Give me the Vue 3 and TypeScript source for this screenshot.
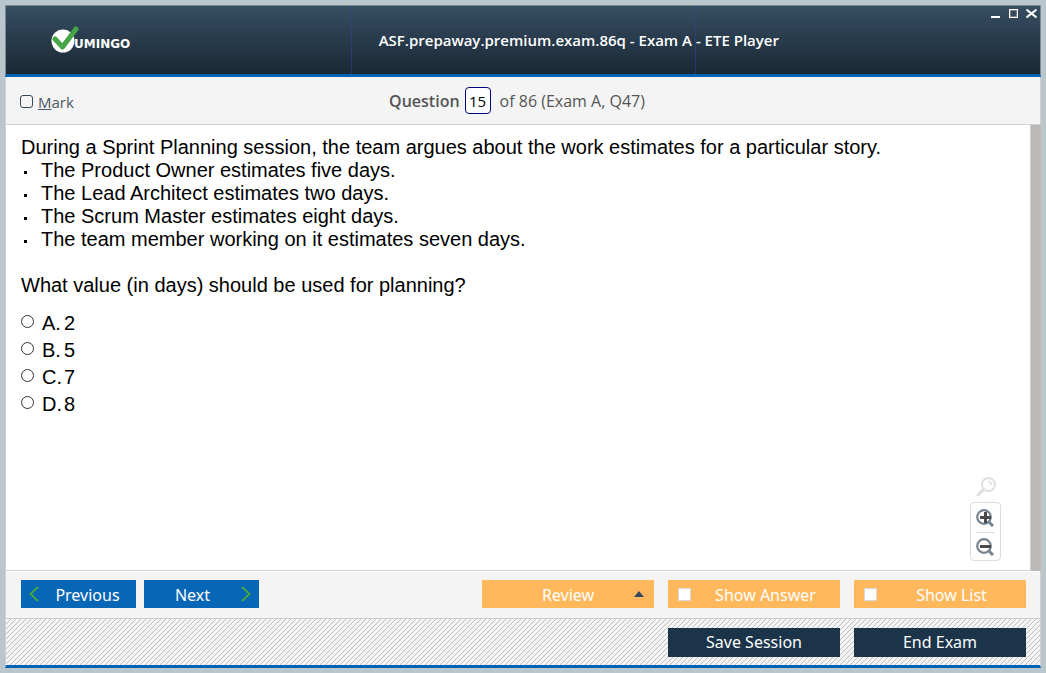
<script setup lang="ts">
import { ref } from 'vue'

const marked = ref(false)
const questionNumber = ref('15')
const selected = ref('')
const showAnswer = ref(false)
const showList = ref(false)
const estimates: string[] = [
  'The Product Owner estimates five days.',
  'The Lead Architect estimates two days.',
  'The Scrum Master estimates eight days.',
  'The team member working on it estimates seven days.',
]
const answers = [
  { key: 'A', text: '2' },
  { key: 'B', text: '5' },
  { key: 'C', text: '7' },
  { key: 'D', text: '8' },
]
</script>

<template>
  <div class="desktop">
    <div class="window">
      <header class="titlebar">
        <div class="brand">
          <svg class="logo" viewBox="0 0 28 28" aria-hidden="true">
            <circle cx="12" cy="15" r="11.5" fill="#fff" />
            <path d="M4 13 L11.5 21 L25 3" fill="none" stroke="#46a546" stroke-width="5" stroke-linecap="round" stroke-linejoin="round" />
          </svg>
          <span class="brand-name">UMINGO</span>
        </div>
        <h1 class="title">ASF.prepaway.premium.exam.86q - Exam A - ETE Player</h1>
        <div class="window-controls">
          <button type="button" aria-label="Minimize">
            <svg viewBox="0 0 11 11"><path d="M1 9H10" stroke="#fff" stroke-width="2" /></svg>
          </button>
          <button type="button" aria-label="Maximize">
            <svg viewBox="0 0 11 11"><rect x="1.5" y="1.5" width="8" height="8" fill="none" stroke="#fff" /><rect x="2.5" y="2.5" width="6" height="6" fill="none" stroke="#7d7d7d" /></svg>
          </button>
          <button type="button" aria-label="Close">
            <svg viewBox="0 0 11 11"><path d="M0.5 1.5L10.5 9.5M10.5 1.5L0.5 9.5" stroke="#fff" stroke-width="2" /></svg>
          </button>
        </div>
      </header>

      <div class="question-bar">
        <label class="mark"><input v-model="marked" type="checkbox" /><span><u>M</u>ark</span></label>
        <div class="counter">
          <label class="counter-label" for="question-number">Question</label>
          <input id="question-number" v-model="questionNumber" type="text" />
          <span class="counter-total">of 86 (Exam A, Q47)</span>
        </div>
      </div>

      <main class="content">
        <div class="page">
          <p>During a Sprint Planning session, the team argues about the work estimates for a particular story.</p>
          <ul>
            <li v-for="line in estimates" :key="line">{{ line }}</li>
          </ul>
          <p class="ask">What value (in days) should be used for planning?</p>
          <div class="answers">
            <label v-for="a in answers" :key="a.key">
              <input v-model="selected" type="radio" name="answer" :value="a.key" />
              <span class="key">{{ a.key }}.</span><span>{{ a.text }}</span>
            </label>
          </div>
          <div class="zoom">
            <svg class="zoom-icon" viewBox="0 0 20 20" aria-hidden="true">
              <g fill="none" stroke="#dedede" stroke-linecap="round">
                <circle cx="12.5" cy="7.5" r="6.5" stroke-width="2" />
                <path d="M7.5 12.5L2 18" stroke-width="3" />
                <path d="M12.5 4.5Q15 5 15.5 7.5" stroke-width="1.5" />
              </g>
            </svg>
            <div class="zoom-box">
              <button type="button" aria-label="Zoom in">
                <svg viewBox="0 0 18 18">
                  <circle cx="8" cy="8" r="6.8" fill="none" stroke="#75838f" stroke-width="2.2" />
                  <path d="M12.5 12.5L17 17" stroke="#75838f" stroke-width="3" />
                  <path d="M4 8.5H15M9.5 3V14" stroke="#4a4a4a" stroke-width="3" />
                </svg>
              </button>
              <button type="button" aria-label="Zoom out">
                <svg viewBox="0 0 18 18">
                  <circle cx="8" cy="8" r="6.8" fill="none" stroke="#75838f" stroke-width="2.2" />
                  <path d="M12.5 12.5L17 17" stroke="#75838f" stroke-width="3" />
                  <path d="M4 8.5H15" stroke="#4a4a4a" stroke-width="3" />
                </svg>
              </button>
            </div>
          </div>
        </div>
        <div class="scrollbar"></div>
      </main>

      <div class="toolbar">
        <button class="nav" type="button">
          <svg class="arrow" viewBox="0 0 10 16"><path d="M9 1L1.5 8L9 15" /></svg>
          <span>Previous</span>
        </button>
        <button class="nav next" type="button">
          <span>Next</span>
          <svg class="arrow" viewBox="0 0 10 16"><path d="M1 1L8.5 8L1 15" /></svg>
        </button>
        <button class="option first" type="button">
          <span>Review</span>
          <svg class="caret" viewBox="0 0 10 6"><path d="M0 6L5 0L10 6Z" fill="#34495e" /></svg>
        </button>
        <label class="option"><input v-model="showAnswer" type="checkbox" /><span>Show Answer</span></label>
        <label class="option"><input v-model="showList" type="checkbox" /><span>Show List</span></label>
      </div>

      <footer class="session">
        <button type="button">Save Session</button>
        <button type="button">End Exam</button>
      </footer>
    </div>
  </div>
</template>

<style>
body {
  margin: 0;
}
</style>

<style scoped>
* {
  box-sizing: border-box;
}
button {
  border: 0;
  padding: 0;
  background: none;
  font: inherit;
  color: inherit;
}
input {
  appearance: none;
  margin: 0;
}
svg {
  display: block;
}
.desktop {
  min-height: 100vh;
  padding: 5px;
  display: flex;
  background: #b9c6cc;
  font-family: "Open Sans", "Noto Sans", sans-serif;
  font-size: 16px;
}
.window {
  flex: 1;
  display: flex;
  flex-direction: column;
  border-left: 1px solid #cfd1d1;
  border-right: 1px solid #cfd1d1;
}
.titlebar {
  height: 72px;
  margin: 0 -1px;
  flex: none;
  display: grid;
  grid-template-columns: repeat(3, minmax(0, 1fr));
  border: 1px solid #7e8b92;
  border-bottom: 3px solid #0563b3;
  background: linear-gradient(#364e62, #1a2835);
  color: #fff;
}
.brand {
  display: flex;
  align-items: center;
  padding-left: 45px;
}
.logo {
  width: 28px;
  height: 28px;
  margin-right: -5px;
}
.brand-name {
  padding-top: 8px;
  font: bold 12px "DejaVu Sans", sans-serif;
}
.title {
  margin: 0;
  padding-left: 27px;
  display: flex;
  align-items: center;
  border-left: 1px dotted #33419a;
  font-size: 15px;
  font-weight: 600;
  line-height: 20px;
  white-space: nowrap;
}
.window-controls {
  display: flex;
  justify-content: flex-end;
  gap: 7px;
  padding: 2px 3px;
  border-left: 1px dotted #33419a;
}
.window-controls button {
  height: 11px;
}
.window-controls svg {
  width: 11px;
  height: 11px;
}
.question-bar {
  height: 48px;
  flex: none;
  display: grid;
  grid-template-columns: 1fr auto 1fr;
  align-items: center;
  border-bottom: 1px solid #d2d2d2;
  background: #f4f4f4;
  color: #555;
}
.mark {
  display: flex;
  align-items: center;
  gap: 5px;
  padding: 2px 0 0 14px;
  font-size: 15px;
  color: #4b5866;
}
.mark input {
  width: 13px;
  height: 13px;
  border: 1px solid #34495e;
  border-radius: 3px;
}
.counter {
  display: flex;
  align-items: center;
  padding-right: 12px;
}
.counter-label {
  font-weight: 600;
}
.counter input {
  width: 26px;
  height: 27px;
  margin: 0 9px 0 5px;
  padding: 0;
  border: 1px solid #000080;
  border-radius: 4px;
  background: #fff;
  color: #000;
  font: 15px "Open Sans", sans-serif;
  text-align: center;
}
.content {
  flex: 1;
  display: flex;
  margin-right: -1px;
  background: #fff;
  color: #000;
  font: 20px/23px "Liberation Sans", Arial, sans-serif;
}
.page {
  position: relative;
  flex: 1;
  padding: 11px 15px;
  border-right: 1px solid #d2d2d2;
  border-bottom: 1px solid #d2d2d2;
}
.scrollbar {
  width: 10px;
  background: #bab9b5;
}
.page p {
  margin: 0;
}
.page ul {
  margin: 0;
  padding: 0;
  list-style: none;
}
.page li {
  display: flex;
  align-items: center;
}
.page li::before {
  content: "";
  width: 3px;
  height: 3px;
  margin: 4px 14px 0 3px;
  background: #000;
}
.page .ask {
  margin-top: 23px;
}
.answers {
  margin-top: 13px;
}
.answers label {
  display: flex;
  align-items: center;
  height: 27px;
}
.answers input {
  width: 13px;
  height: 13px;
  margin: 0 8px 4px 0;
  border: 1px solid #333;
  border-radius: 50%;
}
.key {
  width: 22px;
}
.zoom {
  position: absolute;
  right: 29px;
  bottom: 9px;
  display: flex;
  flex-direction: column;
  align-items: center;
  gap: 5px;
}
.zoom-icon {
  width: 20px;
  height: 20px;
}
.zoom-box {
  width: 31px;
  padding: 0 5px;
  border: 1px solid #ddd;
  border-radius: 4px;
}
.zoom-box button {
  display: block;
  width: 100%;
  height: 29px;
}
.zoom-box button + button {
  height: 28px;
  border-top: 1px solid #dcdcdc;
}
.zoom-box svg {
  width: 18px;
  height: 18px;
}
.toolbar {
  height: 48px;
  flex: none;
  display: flex;
  align-items: center;
  gap: 14px;
  padding: 0 14px 2px 15px;
  border-top: 1px solid #fff;
  border-bottom: 1px solid #ccc;
  background: #f4f4f4;
  font-family: "Noto Sans", sans-serif;
  color: #fff;
}
.nav {
  width: 115px;
  height: 28px;
  display: flex;
  align-items: center;
  gap: 8px;
  padding: 0 8px;
  background: #0866b6;
}
.next {
  margin-left: -6px;
}
.nav span,
.option span {
  flex: 1;
  padding-top: 2px;
  text-align: center;
}
.nav .arrow {
  width: 10px;
  height: 16px;
  fill: none;
  stroke: #46a546;
  stroke-width: 2;
}
.option {
  width: 172px;
  height: 28px;
  display: flex;
  align-items: center;
  gap: 10px;
  padding: 0 10px;
  background: #ffb85c;
}
.option.first {
  margin-left: auto;
  padding-left: 30px;
}
.option input {
  width: 13px;
  height: 13px;
  border: 1px solid #d8d8d8;
  background: #fff;
}
.caret {
  width: 10px;
  height: 6px;
}
.session {
  height: 49px;
  margin: 0 -1px;
  flex: none;
  display: flex;
  align-items: center;
  justify-content: flex-end;
  gap: 14px;
  padding: 0 14px;
  border: solid #cfd1d1;
  border-width: 0 1px 3px;
  border-bottom-color: #0563b3;
  background: linear-gradient(135deg, #f4f4f4 45%, #bebebe 45% 55%, #f4f4f4 55%) 0 0 / 5px 5px;
  font-family: "Noto Sans", sans-serif;
  color: #fff;
}
.session button {
  width: 172px;
  height: 29px;
  background: #1b344a;
}
</style>
